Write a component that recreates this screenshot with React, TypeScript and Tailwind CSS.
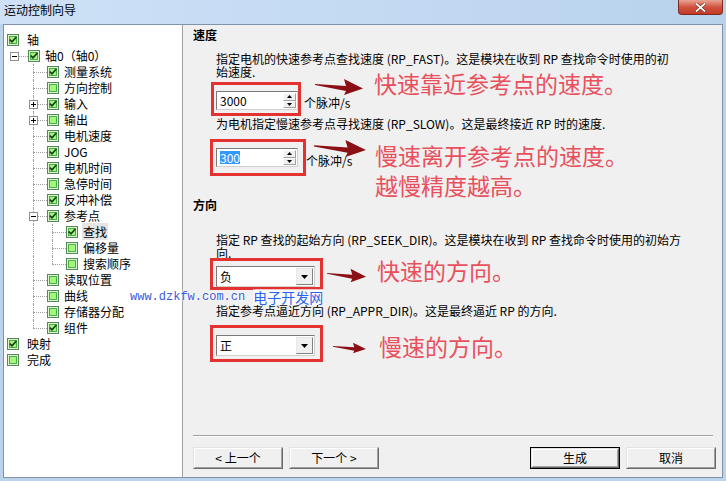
import React from "react";

type Row = {
  label: string;
  level: number;
  on: boolean;
  guides?: boolean[];
  last?: boolean;
  exp?: "+" | "-";
  sel?: boolean;
};

const rows: Row[] = [
  { label: "轴", level: 0, on: true },
  { label: "轴0（轴0）", level: 1, on: true, exp: "-" },
  { label: "测量系统", level: 2, on: true, guides: [false] },
  { label: "方向控制", level: 2, on: false, guides: [false] },
  { label: "输入", level: 2, on: true, guides: [false], exp: "+" },
  { label: "输出", level: 2, on: false, guides: [false], exp: "+" },
  { label: "电机速度", level: 2, on: true, guides: [false] },
  { label: "JOG", level: 2, on: true, guides: [false] },
  { label: "电机时间", level: 2, on: true, guides: [false] },
  { label: "急停时间", level: 2, on: false, guides: [false] },
  { label: "反冲补偿", level: 2, on: true, guides: [false] },
  { label: "参考点", level: 2, on: true, guides: [false], exp: "-" },
  { label: "查找", level: 3, on: true, guides: [false, true], sel: true },
  { label: "偏移量", level: 3, on: false, guides: [false, true] },
  { label: "搜索顺序", level: 3, on: false, guides: [false, true], last: true },
  { label: "读取位置", level: 2, on: false, guides: [false] },
  { label: "曲线", level: 2, on: false, guides: [false] },
  { label: "存储器分配", level: 2, on: false, guides: [false] },
  { label: "组件", level: 2, on: true, guides: [false], last: true },
  { label: "映射", level: 0, on: true },
  { label: "完成", level: 0, on: false },
];

function Check({ on }: { on: boolean }) {
  return (
    <svg width="12" height="12" viewBox="0 0 12 12" className="shrink-0">
      <rect x="0.5" y="0.5" width="11" height="11" fill="#dff5d2" stroke="#5a835a" />
      <rect x="2.5" y="2.5" width="7" height="7" fill="#a6f47e" stroke="#43b143" />
      {on && <path d="M2.8 5.6 L5 7.8 L9.4 3" stroke="#183d18" strokeWidth="1.7" fill="none" />}
    </svg>
  );
}

function Expander({ sign }: { sign: "+" | "-" }) {
  return (
    <div className="absolute left-[6px] top-[4px] w-[9px] h-[9px] bg-white border border-[#919191] flex items-center justify-center">
      <svg width="5" height="5" viewBox="0 0 5 5">
        <rect x="0" y="2" width="5" height="1" fill="#000" />
        {sign === "+" && <rect x="2" y="0" width="1" height="5" fill="#000" />}
      </svg>
    </div>
  );
}

function Guide({ v }: { v: boolean }) {
  return (
    <div className="w-[19px] flex shrink-0">
      <div className="w-[10px]" />
      {v && <div className="border-l border-dotted border-[#a0a0a0]" />}
    </div>
  );
}

function Conn({ root, last, exp }: { root: boolean; last?: boolean; exp?: "+" | "-" }) {
  return (
    <div className="relative w-[24px] flex shrink-0">
      <div className="w-[10px]" />
      <div className="flex-1 flex flex-col">
        <div className={root ? "h-[8px]" : "h-[8px] border-l border-dotted border-[#a0a0a0]"} />
        <div
          className={
            root || last
              ? "flex-1 border-t border-dotted border-[#a0a0a0]"
              : "flex-1 border-t border-l border-dotted border-[#a0a0a0]"
          }
        />
      </div>
      {exp && <Expander sign={exp} />}
    </div>
  );
}

function TreeRow({ r }: { r: Row }) {
  return (
    <div className="flex h-[16px] items-stretch">
      {r.level === 0 && <div className="w-[3px]" />}
      {(r.guides || []).map((g, i) => (
        <Guide key={i} v={g} />
      ))}
      {r.level >= 1 && <Conn root={r.level === 1} last={r.last} exp={r.exp} />}
      <div className="flex items-center">
        <Check on={r.on} />
      </div>
      <div className={r.level === 0 ? "ml-[8px] leading-[16px]" : "ml-[5px] leading-[16px]"}>
        <span className={r.sel ? "bg-[#e5e5e5] px-[1px] -mx-[1px]" : ""}>{r.label}</span>
      </div>
    </div>
  );
}

function SpinBtn({ up }: { up?: boolean }) {
  return (
    <div className="flex-1 flex items-center justify-center bg-[#f0f0f0] border border-[#a0a0a0] border-t-white border-l-white">
      <svg width="5" height="3" viewBox="0 0 5 3">
        <path d={up ? "M2.5 0L5 3H0z" : "M0 0H5L2.5 3z"} fill="#000" />
      </svg>
    </div>
  );
}

function SpinBox({ children }: { children: React.ReactNode }) {
  return (
    <div className="flex w-[82px] h-[19px] bg-white border border-[#7a7a7a] border-r-[#d0d0d0] border-b-[#d0d0d0]">
      <div className="flex-1 pl-[3px] flex items-center text-[12px]">{children}</div>
      <div className="w-[15px] flex flex-col p-[1px]">
        <SpinBtn up />
        <SpinBtn />
      </div>
    </div>
  );
}

function Combo({ value }: { value: string }) {
  return (
    <div className="flex w-[99px] h-[21px] bg-white border border-[#7a7a7a] border-r-[#d0d0d0] border-b-[#d0d0d0]">
      <div className="flex-1 pl-[3px] leading-[19px]">{value}</div>
      <div className="w-[17px] m-[1px] flex items-center justify-center bg-[#f0f0f0] border border-[#808080] border-t-[#e8e8e8] border-l-[#e8e8e8]">
        <svg width="7" height="4" viewBox="0 0 7 4">
          <path d="M0 0H7L3.5 4z" fill="#000" />
        </svg>
      </div>
    </div>
  );
}

function Arrow({ w, h }: { w: number; h: number }) {
  return (
    <svg width={w} height={h} viewBox="0 0 48 18" preserveAspectRatio="none">
      <path d="M0 6 L31 8 L29 1 L48 10.5 L29 17 L31 13 L0 7z" fill="#8b0f14" />
    </svg>
  );
}

function Btn({ children, def }: { children: React.ReactNode; def?: boolean }) {
  return (
    <div className={def ? "w-[90px] h-[22px] border border-black" : "w-[90px] h-[22px]"}>
      <div className="h-full border border-t-[#e3e3e3] border-l-[#e3e3e3] border-r-[#696969] border-b-[#696969]">
        <div className="h-full flex items-center justify-center bg-[#f0f0f0] border border-t-white border-l-white border-r-[#a0a0a0] border-b-[#a0a0a0] leading-none">
          {children}
        </div>
      </div>
    </div>
  );
}

export default function App() {
  return (
    <div className="relative w-[726px] h-[481px] overflow-hidden flex flex-col bg-[#bcd3ec] text-[12px] text-black font-['Noto_Sans_CJK_SC',sans-serif]">
      {/* title bar */}
      <div className="h-[24px] flex justify-between bg-gradient-to-r from-[#cee1f6] via-[#c3daf3] to-[#b9d2ec]">
        <div className="pl-[4px] pt-[3px] leading-[14px]">运动控制向导</div>
        <div className="mr-[3px] w-[45px] h-[15px] rounded-b-[4px] border border-t-0 border-[#7d2a22] bg-gradient-to-b from-[#e9a394] via-[#d0523f] to-[#c23a28] flex items-center justify-center">
          <svg width="11" height="9" viewBox="0 0 11 9">
            <path d="M1 0.5 L10 8.5 M10 0.5 L1 8.5" stroke="#5a1a14" strokeWidth="3" />
            <path d="M1 0.5 L10 8.5 M10 0.5 L1 8.5" stroke="#fff" strokeWidth="1.8" />
          </svg>
        </div>
      </div>

      {/* client */}
      <div className="flex-1 mx-[3px] mb-[3px] border border-[#7f93ab] flex min-h-0">
        <div className="w-[179px] bg-white border-r border-[#a0a0a0] pt-[7px]">
          {rows.map((r, i) => (
            <TreeRow key={i} r={r} />
          ))}
        </div>

        <div className="flex-1 bg-[#f0f0f0] flex flex-col pl-[10px]">
          <div className="mt-[3px] font-bold leading-[14px]">速度</div>
          <div className="mt-[10px] ml-[23px] leading-[13px]">
            指定电机的快速参考点查找速度 (RP_FAST)。这是模块在收到 RP 查找命令时使用的初
            <br />
            始速度.
          </div>
          <div className="mt-[4px] ml-[18px] flex items-end">
            <div className="border-[3px] border-[#e3322f] pl-[2px] pt-[6px] pb-[3px]">
              <SpinBox>3000</SpinBox>
            </div>
            <div className="ml-[3px] mb-[7px] leading-[13px]">个脉冲/s</div>
          </div>
          <div className="mt-[1px] ml-[23px] leading-[13px]">
            为电机指定慢速参考点寻找速度 (RP_SLOW)。这是最终接近 RP 时的速度.
          </div>
          <div className="mt-[9px] ml-[17px] flex items-end">
            <div className="border-[3px] border-[#e3322f] pl-[3px] pr-[5px] pt-[6px] pb-[6px]">
              <SpinBox>
                <span className="inline-block bg-[#3399ff] text-white leading-[13px]">300</span>
              </SpinBox>
            </div>
            <div className="mb-[9px] leading-[13px]">个脉冲/s</div>
          </div>

          <div className="mt-[22px] font-bold leading-[14px]">方向</div>
          <div className="mt-[21px] ml-[23px] leading-[13px]">
            指定 RP 查找的起始方向 (RP_SEEK_DIR)。这是模块在收到 RP 查找命令时使用的初始方
            <br />
            向.
          </div>
          <div className="-mt-[1px] ml-[17px] flex">
            <div className="border-[3px] border-[#e3322f] pl-[3px] pr-[5px] pt-[5px]">
              <Combo value="负" />
            </div>
          </div>
          <div className="mt-[14px] ml-[23px] leading-[13px]">
            指定参考点逼近方向 (RP_APPR_DIR)。这是最终逼近 RP 的方向.
          </div>
          <div className="mt-[8px] ml-[17px] flex">
            <div className="border-[3px] border-[#e3322f] pl-[3px] pr-[5px] pt-[7px] pb-[3px]">
              <Combo value="正" />
            </div>
          </div>

          <div className="mt-auto pr-[6px] pb-[8px]">
            <div className="mr-[3px] border-t border-[#a0a0a0] border-b border-b-white" />
            <div className="mt-[10px] flex gap-[6px]">
              <Btn>&lt; 上一个</Btn>
              <Btn>下一个 &gt;</Btn>
              <div className="flex-1" />
              <Btn def>生成</Btn>
              <Btn>取消</Btn>
            </div>
          </div>
        </div>
      </div>

      {/* annotations drawn over the dialog */}
      <div className="absolute left-[315px] top-[78px]">
        <Arrow w={48} h={18} />
      </div>
      <div className="absolute left-[374px] top-[72px] text-[23px] leading-[23px] text-[#e8505e] whitespace-nowrap">
        快速靠近参考点的速度。
      </div>
      <div className="absolute left-[314px] top-[139px]">
        <Arrow w={52} h={19} />
      </div>
      <div className="absolute left-[375px] top-[140px] text-[23px] leading-[30px] text-[#e8505e] whitespace-nowrap">
        慢速离开参考点的速度。
        <br />
        越慢精度越高。
      </div>
      <div className="absolute left-[327px] top-[268px]">
        <Arrow w={39} h={15} />
      </div>
      <div className="absolute left-[377px] top-[259px] text-[23px] leading-[23px] text-[#e8505e] whitespace-nowrap">
        快速的方向。
      </div>
      <div className="absolute left-[333px] top-[342px]">
        <Arrow w={33} h={12} />
      </div>
      <div className="absolute left-[379px] top-[335px] text-[23px] leading-[23px] text-[#e8505e] whitespace-nowrap">
        慢速的方向。
      </div>

      {/* watermark */}
      <div className="absolute left-[130px] top-[288px] flex items-center whitespace-nowrap">
        <span className="font-['Liberation_Mono',monospace] text-[12px] text-[#3b5bdb] [text-shadow:0_0_3px_#fff,0_0_3px_#fff]">
          www.dzkfw.com.cn
        </span>
        <span className="ml-[8px] text-[14px] leading-[16px] text-[#2a62f0] bg-white/70">电子开发网</span>
      </div>
    </div>
  );
}
